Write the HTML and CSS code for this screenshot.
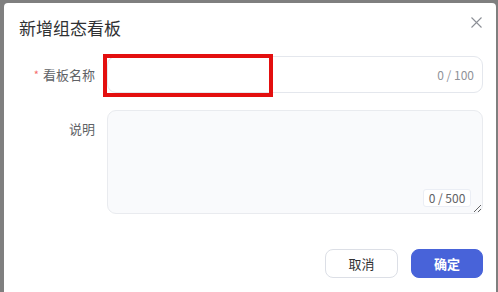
FILE: index.html
```html
<!DOCTYPE html>
<html lang="zh-CN">
<head>
<meta charset="utf-8">
<title>新增组态看板</title>
<link rel="stylesheet" href="styles.css">
</head>
<body>
<div class="dialog">
  <header class="dlg-head">
    <h2 class="dlg-title">新增组态看板</h2>
    <button class="dlg-close" type="button" aria-label="关闭">
      <svg width="11" height="11" viewBox="0 0 11 11"><path d="M0.5 0.5L10.5 10.5M10.5 0.5L0.5 10.5" stroke="#8c8f96" stroke-width="1.1" fill="none"/></svg>
    </button>
  </header>
  <form class="dlg-body">
    <div class="form-row">
      <label class="form-label"><span class="req">*</span>看板名称</label>
      <div class="input-wrap">
        <input class="text-input" type="text">
        <span class="input-count">0 / 100</span>
      </div>
    </div>
    <div class="form-row">
      <label class="form-label">说明</label>
      <div class="ta-wrap">
        <textarea class="text-area"></textarea>
        <span class="ta-count">0 / 500</span>
      </div>
    </div>
  </form>
  <footer class="dlg-foot">
    <button class="btn btn-cancel" type="button">取消</button>
    <button class="btn btn-ok" type="button">确定</button>
  </footer>
  <div class="annot"></div>
</div>
</body>
</html>
```
FILE: styles.css
```css
html, body {
  margin: 0;
  padding: 0;
}
body {
  background: #7f7f7f;
  height: 292px;
  overflow: hidden;
  font-family: "Noto Sans CJK SC", "Noto Sans", sans-serif;
}
.dialog {
  position: relative;
  margin: 3px 0 0 4px;
  width: 492px;
  height: 300px;
  background: #fff;
  border-radius: 4px 4px 0 0;
}
.dlg-head {
  display: flex;
  align-items: flex-start;
  justify-content: space-between;
  padding: 13px 14px 0 15px;
  height: 24px;
}
.dlg-title {
  margin: 0;
  font-size: 17px;
  line-height: 24px;
  font-weight: 400;
  color: #303133;
}
.dlg-close {
  border: 0;
  background: none;
  padding: 0;
  width: 11px;
  height: 11px;
  display: flex;
  margin-top: 1px;
}
.dlg-body {
  padding: 16px 13px 0 0;
  display: flex;
  flex-direction: column;
  gap: 16px;
}
.form-row {
  display: flex;
  align-items: flex-start;
}
.form-label {
  width: 91px;
  flex: none;
  text-align: right;
  font-size: 13px;
  line-height: 37px;
  color: #606266;
  margin-right: 12px;
}
.req {
  color: #f56c6c;
  font-size: 11px;
  margin-right: 4px;
  position: relative;
  top: -1px;
}
.input-wrap {
  position: relative;
  flex: 1;
  height: 37px;
}
.text-input {
  box-sizing: border-box;
  width: 100%;
  height: 37px;
  border: 1px solid #e4e7ed;
  border-radius: 9px;
  background: #fff;
  outline: none;
  padding: 0 60px 0 12px;
}
.input-count {
  position: absolute;
  right: 9px;
  top: 0;
  line-height: 37px;
  font-size: 12px;
  color: #909399;
}
.ta-wrap {
  position: relative;
  flex: 1;
  height: 104px;
}
.text-area {
  box-sizing: border-box;
  display: block;
  width: 100%;
  height: 104px;
  border: 1px solid #e9ebef;
  border-radius: 9px;
  background: #f9fafc;
  outline: none;
  resize: vertical;
  padding: 6px 12px;
}
.ta-count {
  position: absolute;
  right: 12px;
  bottom: 7px;
  box-sizing: border-box;
  height: 18px;
  width: 48px;
  text-align: center;
  line-height: 16px;
  font-size: 12px;
  color: #606266;
  background: #fff;
  border: 1px solid #ebeef5;
  border-radius: 3px;
}
.dlg-foot {
  display: flex;
  justify-content: flex-end;
  gap: 13px;
  padding: 35px 13px 0 0;
}
.btn {
  height: 29px;
  border-radius: 8px;
  font-family: inherit;
  font-size: 13px;
  padding: 0;
  cursor: pointer;
}
.btn-cancel {
  width: 73px;
  background: #fff;
  border: 1px solid #dcdfe6;
  color: #303133;
}
.btn-ok {
  width: 72px;
  background: #4863d9;
  border: 1px solid #4863d9;
  color: #fff;
  font-weight: 700;
}
.annot {
  position: absolute;
  left: 99px;
  top: 51px;
  width: 162px;
  height: 35px;
  border: 4px solid #e30f0f;
  pointer-events: none;
}
```
